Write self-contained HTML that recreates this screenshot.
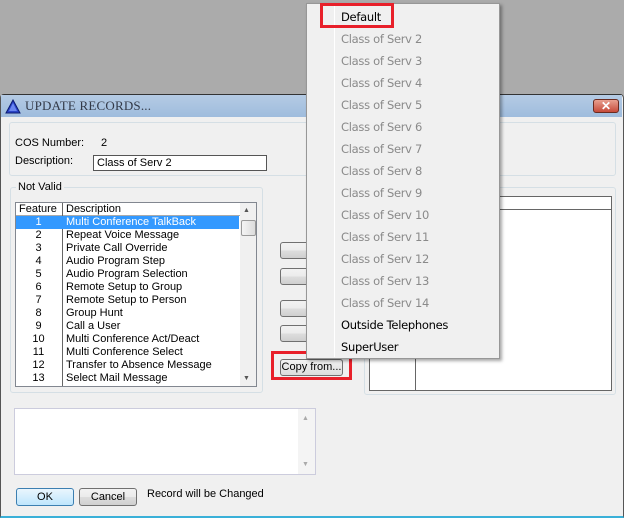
<!DOCTYPE html>
<html><head><style>
*{margin:0;padding:0;box-sizing:border-box}
body{width:624px;height:518px;background:#ababab;position:relative;overflow:hidden;font-family:"Liberation Sans",sans-serif;font-size:11px;color:#000}
.a{position:absolute}
.win{left:0;top:94px;width:624px;height:424px;background:#f0f0f0;border:1px solid #555;border-top-color:#333;border-radius:4px 4px 0 0;border-bottom:2px solid #3ab0d8}
.title{left:1px;top:95px;width:621px;height:22px;background:linear-gradient(#b5cbe4,#9fbcdd);}
.grp{border:1px solid #d5dfe5;border-radius:3px}
.lb{background:#fff;border:1px solid #828790}
.btn{border:1px solid #707070;border-radius:3px;background:linear-gradient(#f2f2f2 0%,#ebebeb 50%,#dddddd 51%,#cfcfcf 100%);text-align:center;font-size:11px;line-height:15px}
.row{position:absolute;left:0;height:13px;line-height:13px;width:223px}
.row .n{position:absolute;left:0;width:45px;text-align:center}
.row .d{position:absolute;left:50px}
.mi{position:absolute;left:34px;font-family:"DejaVu Sans",sans-serif;font-size:11.5px;color:#8a8a8a;height:22px;line-height:22px;letter-spacing:-0.3px}
</style></head><body>
<div class="a win"></div>
<div class="a title"></div>
<svg class="a" style="left:5px;top:99px" width="16" height="15"><polygon points="8,1 15,14 1,14" fill="#2a44c8" stroke="#0a1a70"/><polygon points="8,4 12,12 4,12" fill="#6a86f0"/></svg>
<div class="a" style="left:25px;top:98px;font-family:'Liberation Serif',serif;font-size:13px;color:#333a48;letter-spacing:0.2px">UPDATE RECORDS...</div>
<div class="a" style="left:593px;top:99px;width:26px;height:14px;border:1px solid #6a2a20;border-radius:3px;background:linear-gradient(#e8a090,#c64a3a);color:#fff;font-weight:bold;text-align:center;line-height:12px;font-size:12px">✕</div>

<div class="a grp" style="left:9px;top:122px;width:607px;height:54px"></div>
<div class="a" style="left:15px;top:137px">COS Number:</div>
<div class="a" style="left:101px;top:137px">2</div>
<div class="a" style="left:15px;top:155px">Description:</div>
<div class="a" style="left:93px;top:155px;width:174px;height:16px;background:#fff;border:1px solid #555;padding-left:3px;line-height:14px">Class of Serv 2</div>

<div class="a grp" style="left:10px;top:187px;width:253px;height:206px"></div>
<div class="a" style="left:16px;top:181px;background:#f0f0f0;padding:0 2px">Not Valid</div>
<div class="a lb" style="left:15px;top:202px;width:242px;height:185px;overflow:hidden">
 <div class="a" style="left:0;top:0;width:224px;height:13px;border-bottom:1px solid #aaa;background:#fff"></div>
 <div class="a" style="left:3px;top:0;line-height:13px">Feature</div>
 <div class="a" style="left:50px;top:0;line-height:13px">Description</div>
 <div class="a" style="left:46px;top:0;width:1px;height:184px;background:#666"></div>
 <div style="position:absolute;left:0;top:13px;width:224px">
  <div class="row" style="top:0;background:#3399ff;color:#fff"><span class="n">1</span><span class="d">Multi Conference TalkBack</span></div>
  <div class="row" style="top:13px"><span class="n">2</span><span class="d">Repeat Voice Message</span></div>
  <div class="row" style="top:26px"><span class="n">3</span><span class="d">Private Call Override</span></div>
  <div class="row" style="top:39px"><span class="n">4</span><span class="d">Audio Program Step</span></div>
  <div class="row" style="top:52px"><span class="n">5</span><span class="d">Audio Program Selection</span></div>
  <div class="row" style="top:65px"><span class="n">6</span><span class="d">Remote Setup to Group</span></div>
  <div class="row" style="top:78px"><span class="n">7</span><span class="d">Remote Setup to Person</span></div>
  <div class="row" style="top:91px"><span class="n">8</span><span class="d">Group Hunt</span></div>
  <div class="row" style="top:104px"><span class="n">9</span><span class="d">Call a User</span></div>
  <div class="row" style="top:117px"><span class="n">10</span><span class="d">Multi Conference Act/Deact</span></div>
  <div class="row" style="top:130px"><span class="n">11</span><span class="d">Multi Conference Select</span></div>
  <div class="row" style="top:143px"><span class="n">12</span><span class="d">Transfer to Absence Message</span></div>
  <div class="row" style="top:156px"><span class="n">13</span><span class="d">Select Mail Message</span></div>
 </div>
 <div class="a" style="left:224px;top:0;width:17px;height:184px;background:#f0f0f0"></div>
 <div class="a" style="left:227px;top:4px;font-size:7px;color:#555">▲</div>
 <div class="a" style="left:225px;top:17px;width:15px;height:16px;border:1px solid #999;border-radius:2px;background:linear-gradient(90deg,#f4f4f4,#dcdcdc)"></div>
 <div class="a" style="left:227px;top:172px;font-size:7px;color:#555">▼</div>
</div>

<div class="a btn" style="left:280px;top:242px;width:40px;height:17px"></div>
<div class="a btn" style="left:280px;top:268px;width:40px;height:17px"></div>
<div class="a btn" style="left:280px;top:300px;width:40px;height:17px"></div>
<div class="a btn" style="left:280px;top:325px;width:40px;height:17px"></div>
<div class="a btn" style="left:280px;top:359px;width:63px;height:17px;background:linear-gradient(#f2f2f2,#dcdcdc)">Copy from...</div>
<div class="a" style="left:271px;top:351px;width:81px;height:29px;border:3px solid #e8202a"></div>

<div class="a grp" style="left:364px;top:187px;width:252px;height:208px"></div>
<div class="a lb" style="left:369px;top:196px;width:243px;height:195px;border-color:#666">
 <div class="a" style="left:0;top:0;width:241px;height:13px;border-bottom:1px solid #666;background:#fff"></div>
 <div class="a" style="left:45px;top:13px;width:1px;height:180px;background:#666"></div>
</div>

<div class="a lb" style="left:14px;top:408px;width:302px;height:67px;border-color:#ccd">
 <div class="a" style="left:283px;top:0;width:17px;height:65px;background:#f4f4f4"></div>
 <div class="a" style="left:287px;top:6px;font-size:7px;color:#aaa">▲</div>
 <div class="a" style="left:287px;top:52px;font-size:7px;color:#aaa">▼</div>
</div>

<div class="a btn" style="left:16px;top:488px;width:58px;height:18px;border-color:#3c7fb1;background:linear-gradient(#eaf6fd,#bee6fd);line-height:16px">OK</div>
<div class="a btn" style="left:79px;top:488px;width:58px;height:18px;line-height:16px">Cancel</div>
<div class="a" style="left:147px;top:488px">Record will be Changed</div>

<div class="a" style="left:306px;top:3px;width:194px;height:356px;background:#f0f0f0;border:1px solid #979797;box-shadow:2px 2px 3px rgba(0,0,0,0.35)">
 <div class="a" style="left:27px;top:1px;width:1px;height:352px;background:#e2e3e3;border-right:1px solid #fff"></div>
 <div class="mi" style="top:2px;color:#000">Default</div>
 <div class="mi" style="top:24px">Class of Serv 2</div>
 <div class="mi" style="top:46px">Class of Serv 3</div>
 <div class="mi" style="top:68px">Class of Serv 4</div>
 <div class="mi" style="top:90px">Class of Serv 5</div>
 <div class="mi" style="top:112px">Class of Serv 6</div>
 <div class="mi" style="top:134px">Class of Serv 7</div>
 <div class="mi" style="top:156px">Class of Serv 8</div>
 <div class="mi" style="top:178px">Class of Serv 9</div>
 <div class="mi" style="top:200px">Class of Serv 10</div>
 <div class="mi" style="top:222px">Class of Serv 11</div>
 <div class="mi" style="top:244px">Class of Serv 12</div>
 <div class="mi" style="top:266px">Class of Serv 13</div>
 <div class="mi" style="top:288px">Class of Serv 14</div>
 <div class="mi" style="top:310px;color:#000">Outside Telephones</div>
 <div class="mi" style="top:332px;color:#000">SuperUser</div>
</div>
<div class="a" style="left:320px;top:3px;width:74px;height:25px;border:3px solid #e8202a"></div>
</body></html>
